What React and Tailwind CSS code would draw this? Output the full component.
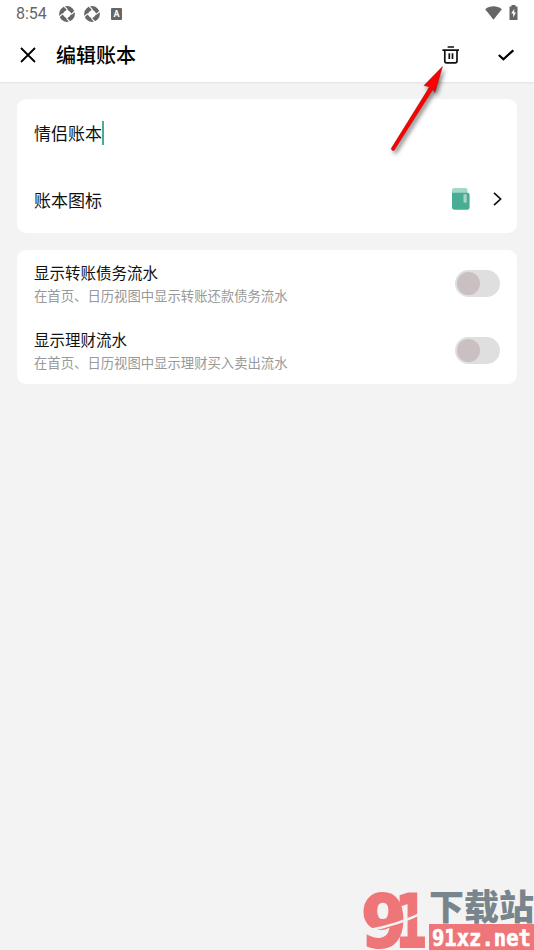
import { useState } from 'react';

const SWITCHES = [
    { id: 'debt', title: '显示转账债务流水', desc: '在首页、日历视图中显示转账还款债务流水' },
    { id: 'invest', title: '显示理财流水', desc: '在首页、日历视图中显示理财买入卖出流水' },
];

function ApertureIcon() {
    return (
        <svg className="h-4 w-4" viewBox="0 0 16 16" fill="none">
            <circle cx="8" cy="8" r="5.6" stroke="#666" strokeWidth="4.6" />
            <path d="M8.2 3.2L12.8 7.8L7.8 12.8L3.2 8.2Z" fill="#fff" />
            <path d="M5 0L8.4 3.6M16 5L12.4 8.4M11 16L7.6 12.4M0 11L3.6 7.6" stroke="#fff" strokeWidth="1.2" />
        </svg>
    );
}

// 状态栏
function StatusBar() {
    return (
        <div className="flex h-7 items-center justify-between px-4">
            <div className="flex items-center">
                <span className="w-[43px] font-['Roboto',sans-serif] text-[16px] leading-7 text-[#666]">8:54</span>
                <div className="flex items-center gap-[9px]">
                    <ApertureIcon />
                    <ApertureIcon />
                    <span className="ml-0.5 flex h-3 w-[11px] items-center justify-center rounded-[1px] bg-[#666] font-['Roboto',sans-serif] text-[9px] font-bold leading-none text-white">A</span>
                </div>
            </div>
            <div className="flex items-center gap-[7px] pb-[3px]">
                <svg className="h-[14px] w-[17px]" viewBox="0 0 17 14" fill="#666">
                    <path d="M0.2 3.2C5.2 -0.6 11.8 -0.6 16.8 3.2L8.5 13.8Z" />
                </svg>
                <svg className="h-[15px] w-[9px]" viewBox="0 0 9 15" fill="#666">
                    <path d="M2.5 0H6.5V1.5H8.5V15H0.5V1.5H2.5Z" />
                    <path d="M5.3 3.7L2.2 8.6H4.2V12.6L7 7.4H5.2Z" fill="#fff" />
                </svg>
            </div>
        </div>
    );
}

function Header() {
    return (
        <header className="h-[82px] bg-white shadow-[0_1px_2px_rgba(0,0,0,0.08)]">
            <StatusBar />
            <div className="flex h-[54px] items-center px-5">
                <button aria-label="关闭">
                    <svg className="h-4 w-4" viewBox="0 0 16 16" fill="none" stroke="#000" strokeWidth="1.8">
                        <path d="M1 1L15 15M15 1L1 15" />
                    </svg>
                </button>
                <h1 className="ml-5 flex-1 text-[20px] font-medium leading-[54px] text-black">编辑账本</h1>
                <button aria-label="删除" className="mr-[38px]">
                    <svg className="h-[18px] w-[18px]" viewBox="0 0 18 18" fill="none" stroke="#111" strokeWidth="1.7">
                        <path d="M5.6 1H12M0.4 4.2H17M2.8 4.2V15Q2.8 16.8 4.5 16.8H13.2Q15 16.8 15 15V4.2M7.3 7.2V13M10.5 7.2V13" />
                    </svg>
                </button>
                <button aria-label="完成">
                    <svg className="h-3 w-4" viewBox="0 0 16 12" fill="none" stroke="#000" strokeWidth="2.2">
                        <path d="M0.8 6L5.4 10.2L15.3 1.3" />
                    </svg>
                </button>
            </div>
        </header>
    );
}

function Toggle({ checked, onChange, label }) {
    return (
        <button
            role="switch"
            aria-checked={checked}
            aria-label={label}
            onClick={onChange}
            className={`flex h-[27px] w-[45px] items-center rounded-full px-[2px] ${checked ? 'justify-end bg-[#48ad93]' : 'bg-[#dfdfdf]'}`}
        >
            <span className="h-[23px] w-[23px] rounded-full bg-[#cac0c2]" />
        </button>
    );
}

// 指向删除按钮的箭头
function Pointer() {
    return (
        <svg className="pointer-events-none absolute left-[385px] top-[60px] h-[100px] w-[70px] drop-shadow-[2px_3px_2px_rgba(0,0,0,0.5)]" viewBox="385 60 70 100">
            <path d="M442.5 66.5L424 85.5L429.6 86.8L391.2 148.6L392 150.3L394 150.6L433 89.3L434.8 92.5Z" fill="#f00" stroke="#700" strokeWidth="0.4" />
        </svg>
    );
}

// 右下角站点水印
function SiteMark() {
    return (
        <div className="pointer-events-none absolute bottom-0 right-0 flex h-[60px] w-[171px] gap-[3px]">
            <svg className="h-[60px] w-[63px]" viewBox="0 0 63 60">
                <g fill="#ee7678" stroke="#ee7678" strokeWidth="2" fontFamily="DejaVu Sans, sans-serif" fontWeight="700" fontSize="73">
                    <text transform="translate(-2 57) scale(0.9 1)">9</text>
                    <text transform="translate(32 57) scale(0.64 1)">1</text>
                </g>
                <path d="M2 41Q36 35 63 21" stroke="#f3f3f3" strokeWidth="2.5" fill="none" />
            </svg>
            <div className="w-[105px]">
                <p className="h-[34px] whitespace-nowrap text-[35px] font-black leading-[30px] text-[#79858c]">下载站</p>
                <svg className="h-[26px] w-[105px] bg-[#ee7678]" viewBox="0 0 105 26">
                    <text x="3" y="21.5" fontSize="23" fontWeight="700" fill="#fff" stroke="#fff" strokeWidth="0.6" fontFamily="DejaVu Sans Mono, monospace" textLength="99" lengthAdjust="spacingAndGlyphs">91xz.net</text>
                </svg>
            </div>
        </div>
    );
}

export default function App() {
    const [enabled, setEnabled] = useState({ debt: false, invest: false });

    return (
        <div className="relative h-[950px] w-[534px] overflow-hidden bg-[#f3f3f3] font-['Noto_Sans_CJK_SC',sans-serif] text-[#111]">
            <Header />

            <main className="flex flex-col gap-[17px] px-[17px] pt-[17px]">
                {/* 名称与图标 */}
                <section className="h-[134px] rounded-[9px] bg-white pl-[17px] pr-[15px]">
                    <div className="flex h-[67px] items-center">
                        <span className="text-[17px]">情侣账本</span>
                        <span className="h-6 w-0.5 bg-[#48ad93]" />
                    </div>
                    <div className="flex h-[67px] items-center">
                        <span className="flex-1 text-[17px]">账本图标</span>
                        <svg className="mb-0.5 mr-[23px] h-[22px] w-[18px]" viewBox="0 0 18 22">
                            <rect width="15.5" height="12" rx="2" fill="#a5d6c9" />
                            <path d="M0 4.8H15.5Q17.6 4.8 17.6 7V19.6Q17.6 21.7 15.5 21.7H2Q0 21.7 0 19.6Z" fill="#48ad93" />
                            <rect x="11.5" y="6.3" width="3.2" height="8.5" rx="0.8" fill="#a5d6c9" />
                        </svg>
                        <svg className="mb-0.5 h-[14px] w-[9px]" viewBox="0 0 9 14" fill="none" stroke="#111" strokeWidth="1.7">
                            <path d="M1 0.8L7.6 7L1 13.2" />
                        </svg>
                    </div>
                </section>

                {/* 显示设置 */}
                <section className="h-[134px] rounded-[9px] bg-white px-[17px]">
                    {SWITCHES.map((item) => (
                        <div key={item.id} className="flex h-[67px] items-center justify-between">
                            <div>
                                <p className="text-[15.5px] leading-[22px]">{item.title}</p>
                                <p className="pt-0.5 text-[13.35px] leading-[22px] text-[#999]">{item.desc}</p>
                            </div>
                            <Toggle
                                label={item.title}
                                checked={enabled[item.id]}
                                onChange={() => setEnabled({ ...enabled, [item.id]: !enabled[item.id] })}
                            />
                        </div>
                    ))}
                </section>
            </main>

            <Pointer />
            <SiteMark />
        </div>
    );
}
